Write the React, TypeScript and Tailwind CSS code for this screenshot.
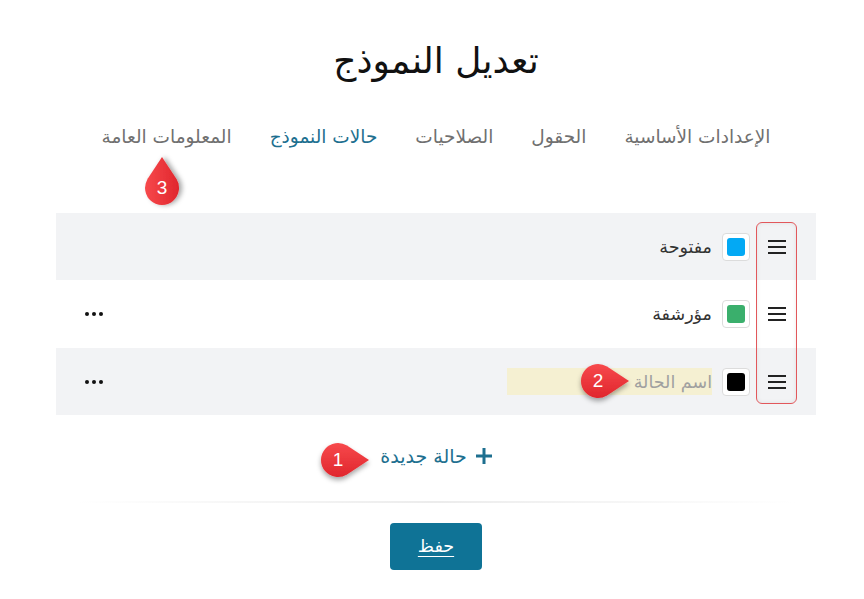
import React from 'react'

const font = { fontFamily: '"DejaVu Sans", "Noto Sans", sans-serif' }

function Hamburger() {
  return (
    <svg width="18" height="16" viewBox="0 0 18 16" className="shrink-0">
      <rect x="0" y="1" width="18" height="2" fill="#222" />
      <rect x="0" y="7" width="18" height="2" fill="#222" />
      <rect x="0" y="13" width="18" height="2" fill="#222" />
    </svg>
  )
}

function Swatch({ color }: { color: string }) {
  return (
    <div className="w-[28px] h-[28px] shrink-0 rounded-[4px] border border-[#dcdcdc] bg-white flex items-center justify-center">
      <div className="w-[18px] h-[18px] rounded-[3px]" style={{ background: color }} />
    </div>
  )
}

function Dots() {
  return (
    <div className="flex gap-[3px] items-center">
      <span className="w-[4px] h-[4px] rounded-full bg-[#111]" />
      <span className="w-[4px] h-[4px] rounded-full bg-[#111]" />
      <span className="w-[4px] h-[4px] rounded-full bg-[#111]" />
    </div>
  )
}

// teardrop marker, rot = direction the tip points (deg, 0 = right)
function Marker({ n, x, y, rot }: { n: string; x: number; y: number; rot: number }) {
  return (
    <div className="absolute w-[80px] h-[80px] pointer-events-none" style={{ left: x - 40, top: y - 40 }}>
      <svg width="80" height="80" viewBox="-40 -40 80 80" className="absolute inset-0">
        <defs>
          <filter id={`sh${n}`} x="-50%" y="-50%" width="200%" height="200%">
            <feDropShadow dx="0" dy="3" stdDeviation="2.5" floodColor="#000" floodOpacity="0.35" />
          </filter>
          <linearGradient id={`gr${n}`} x1="0" y1="0" x2="0" y2="1">
            <stop offset="0" stopColor="#f7494c" />
            <stop offset="1" stopColor="#e0262d" />
          </linearGradient>
        </defs>
        <path
          transform={`rotate(${rot})`}
          d="M31 0 L9 -14.4 A17 17 0 1 0 9 14.4 Z"
          fill={`url(#gr${n})`}
          filter={`url(#sh${n})`}
        />
      </svg>
      <div
        className="absolute inset-0 flex items-center justify-center text-white text-[19px]"
        style={{ fontFamily: '"Liberation Sans", Arial, sans-serif' }}
      >
        {n}
      </div>
    </div>
  )
}

export default function App() {
  const tabs = ['الإعدادات الأساسية', 'الحقول', 'الصلاحيات', 'حالات النموذج', 'المعلومات العامة']
  return (
    <div className="relative w-[864px] h-[599px] bg-white overflow-hidden" style={font}>
      <div className="pl-[8px] flex flex-col items-center" dir="rtl">
        <h1 className="mt-[36px] text-[36px] leading-[50px] text-[#111]">تعديل النموذج</h1>

        <div className="mt-[38px] flex gap-[38px] text-[18.5px] leading-[26px] text-[#707070]">
          {tabs.map(t => (
            <div key={t} className={t === 'حالات النموذج' ? 'text-[#1d6f8f]' : ''}>
              {t}
            </div>
          ))}
        </div>

        <div className="mt-[63px] w-[760px] flex flex-col text-[17.5px] leading-[24px] text-[#333]">
          <div className="h-[67px] bg-[#f2f3f5] flex items-center pr-[30px] pl-[29px]">
            <Hamburger />
            <div className="w-[18px]" />
            <Swatch color="#03a9f4" />
            <div className="mr-[10px]">مفتوحة</div>
          </div>
          <div className="h-[68px] bg-white flex items-center pr-[30px] pl-[29px]">
            <Hamburger />
            <div className="w-[18px]" />
            <Swatch color="#3aaf6c" />
            <div className="mr-[10px]">مؤرشفة</div>
            <div className="mr-auto"><Dots /></div>
          </div>
          <div className="h-[67px] bg-[#f2f3f5] flex items-center pr-[30px] pl-[29px]">
            <Hamburger />
            <div className="w-[18px]" />
            <Swatch color="#000000" />
            <div className="mr-[10px] w-[205px] h-[27px] bg-[#f5f0d2] flex items-center text-[#a0a0a0]">
              اسم الحالة
            </div>
            <div className="mr-auto"><Dots /></div>
          </div>
        </div>

        <div className="mt-[29px] flex items-center gap-[9px] text-[#1d6f8f] text-[19px] leading-[24px]">
          <svg width="16" height="16" viewBox="0 0 16 16">
            <rect x="6.5" y="0" width="3" height="16" fill="#1d6f8f" />
            <rect x="0" y="6.5" width="16" height="3" fill="#1d6f8f" />
          </svg>
          <span>حالة جديدة</span>
        </div>

        <div className="mt-[33px] w-[720px] h-[2px] bg-gradient-to-r from-transparent via-[#ececec] to-transparent" />

        <button className="mt-[20px] w-[92px] h-[47px] rounded-[4px] bg-[#0f7396] text-white text-[17.5px] underline underline-offset-4">
          حفظ
        </button>
      </div>

      {/* annotations */}
      <div className="absolute left-[756px] top-[222px] w-[41px] h-[182px] rounded-[6px] border border-[#e2575b] shadow-[inset_0_0_4px_rgba(0,0,0,0.08)]" />
      <Marker n="3" x={162} y={188} rot={-90} />
      <Marker n="2" x={598} y={381} rot={0} />
      <Marker n="1" x={338} y={460} rot={0} />
    </div>
  )
}
